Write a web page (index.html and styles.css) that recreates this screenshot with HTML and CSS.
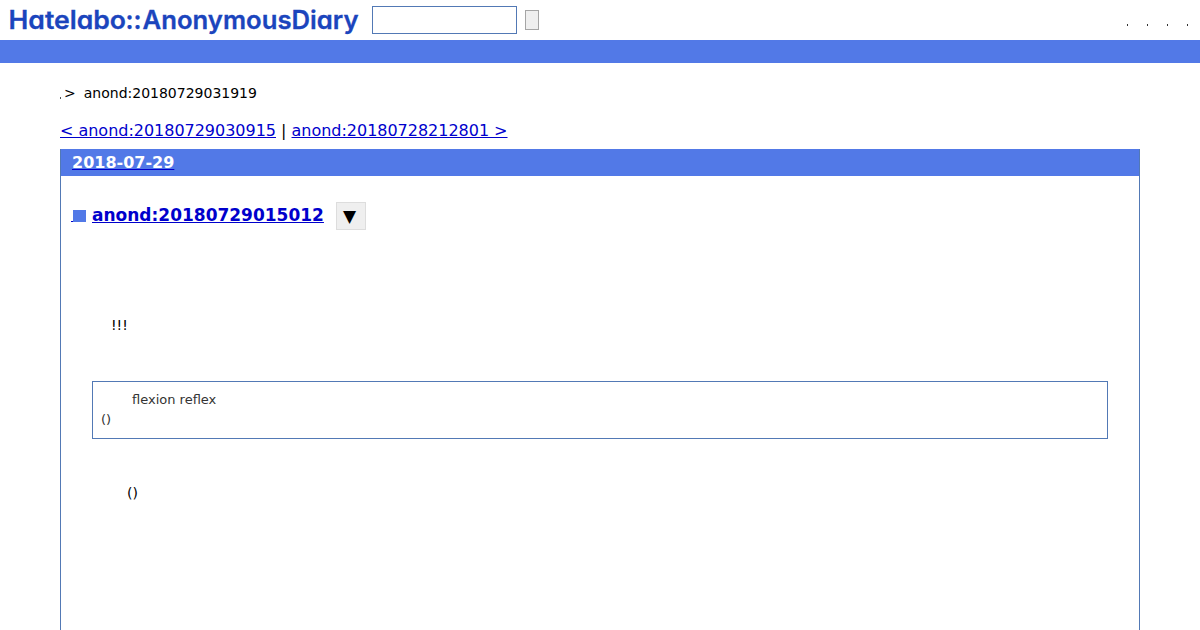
FILE: index.html
```html
<!DOCTYPE html>
<html lang="ja">
<head>
  <meta charset="UTF-8">
  <title>anond:20180729015012</title>
  <link rel="stylesheet" href="styles.css">
</head>
<body>
  <header class="header">
    <a class="logo" href="#">
      <svg width="360" height="40">
        <text x="8.5" y="29" textLength="117.5" lengthAdjust="spacingAndGlyphs">Hatelabo</text>
        <text x="125.5" y="29" textLength="16" lengthAdjust="spacingAndGlyphs">::</text>
        <text x="142.5" y="29" textLength="216" lengthAdjust="spacingAndGlyphs">AnonymousDiary</text>
      </svg>
    </a>
    <form class="search">
      <input type="text" class="search-word">
      <button type="button" class="search-button"></button>
    </form>
    <ul class="menu">
      <li></li>
      <li></li>
      <li></li>
      <li></li>
    </ul>
  </header>
  <div class="bar"></div>

  <div class="container">
    <div class="breadcrumb"><span class="dot"></span><span>&gt;</span><span class="current">anond:20180729031919</span></div>

    <div class="pager">
      <a href="#">&lt; anond:20180729030915</a> | <a href="#">anond:20180728212801 &gt;</a>
    </div>

    <div class="day">
      <h2><a href="#">2018-07-29</a></h2>
      <div class="section">
        <h3>
          <a href="#" class="sanchor"><span></span></a>
          <a href="#">anond:20180729015012</a>
          <button type="button" class="share">▼</button>
        </h3>
        <p class="first">!!!</p>
        <blockquote>
          <p class="indent">flexion reflex</p>
          <p>()</p>
        </blockquote>
        <p class="last">()</p>
      </div>
    </div>
  </div>
</body>
</html>
```

FILE: styles.css
```css
body {
  margin: 0;
  background: #fff;
  color: #000;
  font-family: "DejaVu Sans", sans-serif;
  font-size: 14px;
}

a {
  color: #0000cc;
}

/* Header */
.header {
  display: flex;
  align-items: center;
  height: 40px;
}

.logo,
.logo svg {
  display: block;
}

.logo svg {
  overflow: visible;
}

.logo text {
  font-family: Inter, sans-serif;
  font-size: 25.5px;
  font-weight: 600;
  font-feature-settings: "cv11";
  fill: #1b45bd;
  stroke: #1b45bd;
  stroke-width: 0.3px;
}

.search {
  display: flex;
  align-items: center;
  margin-left: 12px;
}

.search-word {
  box-sizing: border-box;
  width: 145px;
  height: 28px;
  border: 1px solid #5279b5;
  background: #fff;
}

.search-button {
  box-sizing: border-box;
  width: 14px;
  height: 20px;
  margin-left: 8px;
  padding: 0;
  border: 1px solid #a5a5a5;
  background: #efefef;
}

.menu {
  display: flex;
  gap: 19px;
  margin: 9px 12px 0 auto;
  padding: 0;
  list-style: none;
}

.menu li {
  width: 1px;
  height: 2px;
  background: #333;
}

.bar {
  height: 23px;
  background: #5279e7;
}

/* Content */
.container {
  margin: 0 60px;
}

.breadcrumb {
  display: flex;
  padding-top: 20px;
  line-height: 20px;
}

.breadcrumb .dot {
  width: 1px;
  height: 2px;
  margin: 14px 3px 0 0;
  background: #555;
}

.breadcrumb .current {
  margin-left: 8px;
}

.pager {
  margin-top: 18px;
  font-size: 16px;
  line-height: 20px;
  letter-spacing: -0.02px;
}

/* Diary entry */
.day {
  box-sizing: border-box;
  margin-top: 8px;
  height: 481px;
  border: 1px solid #5279b5;
  border-bottom: none;
}

.day h2 {
  margin: -1px 0 0;
  padding: 0 11px;
  height: 27px;
  background: #5279e7;
  font-size: 16px;
  line-height: 27px;
}

.day h2 a {
  color: #fff;
  text-decoration-color: #0000cc;
}

.section {
  padding: 26px 31px 0;
}

.section h3 {
  display: flex;
  margin: 0 0 0 -21px;
  height: 28px;
  font-size: 17px;
  line-height: 26px;
}

.sanchor {
  width: 15px;
  height: 19px;
  margin-right: 6px;
  border-bottom: 1px solid #0000cc;
}

.sanchor span {
  display: block;
  width: 13px;
  height: 12px;
  margin: 8px 0 0 2px;
  background: #5279e7;
}

.share {
  box-sizing: border-box;
  width: 30px;
  height: 28px;
  margin-left: 12px;
  padding: 0 3px 0 0;
  border: 1px solid #ddd;
  background: #efefef;
  color: #000;
  font-family: "DejaVu Sans", sans-serif;
  font-size: 17px;
}

.section p {
  margin: 0;
  line-height: 20px;
}

.section .first {
  padding: 85px 0 0 19px;
}

.section blockquote {
  margin: 46px 0 0;
  padding: 8px;
  border: 1px solid #5279b5;
  color: #333;
  font-size: 13px;
}

.section .indent {
  padding-left: 31px;
}

.section .last {
  padding: 44px 0 0 35px;
}
```
